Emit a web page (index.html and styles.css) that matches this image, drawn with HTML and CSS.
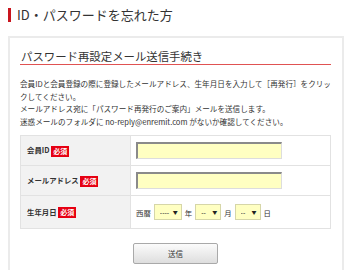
FILE: index.html
```html
<!DOCTYPE html>
<html lang="ja">
<head>
    <meta charset="UTF-8" />
    <meta name="viewport" content="width=device-width, initial-scale=1.0" />
    <title>ID・パスワードを忘れた方</title>
    <link rel="stylesheet" href="styles.css">
</head>
<body>
    <h1 class="page-title">ID・パスワードを忘れた方</h1>

    <div class="panel">
        <h2 class="panel-title">パスワード再設定メール送信手続き</h2>
        <p class="lead">
            会員IDと会員登録の際に登録したメールアドレス、生年月日を入力して［再発行］をクリックしてください。<br>
            メールアドレス宛に「パスワード再発行のご案内」メールを送信します。<br>
            迷惑メールのフォルダに no-reply@enremit.com がないか確認してください。
        </p>

        <!-- Reset form -->
        <form class="reset-form">
            <table class="form-table">
                <tr class="row">
                    <th>会員ID <span class="required">必須</span></th>
                    <td><input type="text" class="text-input"></td>
                </tr>
                <tr class="row">
                    <th>メールアドレス <span class="required">必須</span></th>
                    <td><input type="text" class="text-input"></td>
                </tr>
                <tr class="row row-date">
                    <th>生年月日 <span class="required">必須</span></th>
                    <td>
                        <div class="date-fields">
                            <span>西暦</span>
                            <span class="select-wrap"><select class="select select-year"><option>----</option></select></span>
                            <span>年</span>
                            <span class="select-wrap"><select class="select"><option>--</option></select></span>
                            <span>月</span>
                            <span class="select-wrap"><select class="select"><option>--</option></select></span>
                            <span>日</span>
                        </div>
                    </td>
                </tr>
            </table>
            <div class="actions">
                <button type="button" class="submit-button">送信</button>
            </div>
        </form>
    </div>
</body>
</html>
```

FILE: styles.css
```css
/* Base */
body {
    margin: 0;
    background-color: #fff;
    color: #333;
    font-family: "Noto Sans CJK JP", "Noto Sans", sans-serif;
}

/* Page heading with red bar */
.page-title {
    margin: 8px 0 0 8px;
    padding-left: 6px;
    border-left: 3px solid #c9151e;
    font-size: 13px;
    font-weight: normal;
    line-height: 14px;
}

/* Main panel */
.panel {
    margin: 14px 0 0 8px;
    width: 311px;
    padding: 10px 11px 20px 10px;
    border: 2px solid #ebebeb;
}

.panel-title {
    margin: 0;
    padding-left: 1px;
    font-size: 11.4px;
    font-weight: normal;
    line-height: 16px;
    border-bottom: 1px solid #e05252;
}

.lead {
    margin: 13px 0 7px 0;
    font-size: 7.6px;
    line-height: 12.5px;
}

/* Form table */
.form-table {
    width: 100%;
    border-collapse: collapse;
    font-size: 7.4px;
}

.form-table th,
.form-table td {
    border: 1px solid #e2e2e2;
    padding: 0;
}

.form-table th {
    width: 103px;
    padding-left: 6px;
    background-color: #f2f2f2;
    text-align: left;
    font-weight: bold;
    white-space: nowrap;
}

.row {
    height: 30px;
}

.row-date {
    height: 33px;
}

.form-table td {
    padding-left: 5px;
}

.required {
    display: inline-block;
    padding: 0 2px;
    background-color: #e60012;
    color: #fff;
    font-size: 7px;
    line-height: 11px;
    vertical-align: middle;
}

.text-input {
    display: block;
    width: 146px;
    height: 17px;
    box-sizing: border-box;
    margin: 0;
    background-color: #ffffc2;
    border: 1px solid #ddd;
    border-top: 2px solid #8a8a8a;
    border-left: 2px solid #8a8a8a;
}

/* Birth date selects */
.date-fields {
    display: flex;
    align-items: center;
    gap: 3px;
}

.select-wrap {
    position: relative;
    display: inline-block;
}

.select-wrap::after {
    content: "▼";
    position: absolute;
    right: 4px;
    top: 4px;
    font-size: 5px;
    color: #222;
    pointer-events: none;
}

.select {
    appearance: none;
    -webkit-appearance: none;
    width: 26px;
    height: 16px;
    margin: 0;
    padding: 0 0 0 5px;
    background-color: #ffffc2;
    border: 1px solid #d6d6a8;
    border-radius: 0;
    font-family: "Liberation Sans", sans-serif;
    font-size: 7px;
    color: #333;
}

.select-year {
    width: 28px;
}

/* Submit */
.actions {
    display: flex;
    justify-content: center;
    margin-top: 14px;
}

.submit-button {
    width: 85px;
    height: 21px;
    background: linear-gradient(#fbfbfb, #dedede);
    border: 1px solid #a9a9a9;
    border-radius: 2px;
    font-family: inherit;
    font-size: 7.5px;
    color: #333;
}
```
